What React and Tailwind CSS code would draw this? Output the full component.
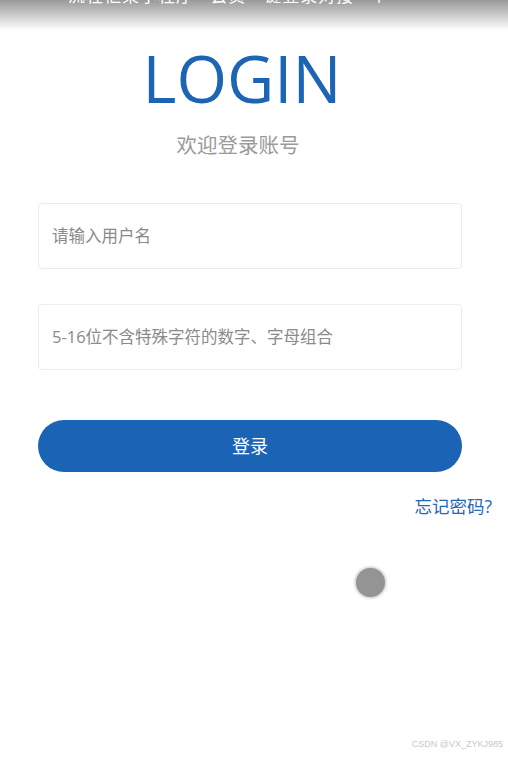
export default function App() {
  const cjk = { fontFamily: '"Open Sans", "Noto Sans CJK SC", sans-serif' };
  return (
    <div className="relative w-[508px] h-[759px] bg-white overflow-hidden" style={cjk}>
      <div className="h-[30px] overflow-hidden bg-gradient-to-b from-[#999999] to-white">
        <p className="-mt-[14px] pl-[68px] text-[17px] leading-[20px] text-white whitespace-nowrap tracking-[1px]">
          流程框架小程序 · 会员一键登录对接 · 个
        </p>
      </div>
      <div className="flex flex-col items-center">
        <h1 className="mt-[10px] ml-[-24px] text-[65px] leading-[76px] text-[#1c64b4]" style={{ fontFamily: '"Open Sans", sans-serif' }}>
          LOGIN
        </h1>
        <p className="mt-[16px] ml-[-32px] text-[20.5px] leading-[26px] text-[#9a9a9a]">欢迎登录账号</p>
      </div>
      <div className="px-[38px] pt-[45px] w-[500px]">
        <div className="h-[66px] rounded-[4px] border border-[#ececec] flex items-center px-[13px] text-[16.5px] text-[#8a8a8a]">
          请输入用户名
        </div>
        <div className="mt-[35px] h-[66px] rounded-[4px] border border-[#ececec] flex items-center px-[13px] text-[16.5px] text-[#8a8a8a]">
          5-16位不含特殊字符的数字、字母组合
        </div>
        <div className="mt-[50px] h-[52px] rounded-full bg-[#1b63b5] flex items-center justify-center text-[18px] text-white">
          登录
        </div>
      </div>
      <div className="flex justify-end pr-[16px] mt-[23px]">
        <span className="text-[17.5px] leading-[22px] text-[#2766b2]">忘记密码?</span>
      </div>
      <div className="flex justify-end pr-[123px] mt-[51px]">
        <div className="w-[29px] h-[29px] rounded-full bg-[#949494] shadow-[0_0_3px_1px_rgba(150,150,150,0.6)]" />
      </div>
      <div className="absolute right-[5px] bottom-[8px] text-[9px] text-[#c8c8c8]" style={{ fontFamily: '"Liberation Sans", sans-serif' }}>
        CSDN @VX_ZYKJ985
      </div>
    </div>
  );
}
